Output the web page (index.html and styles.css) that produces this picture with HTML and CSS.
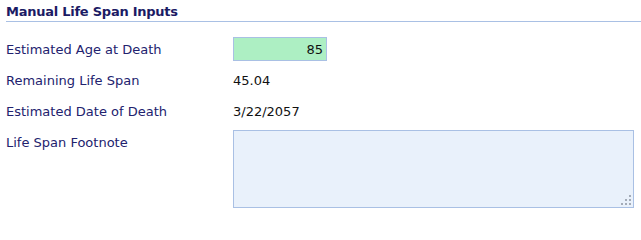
FILE: index.html
```html
<!DOCTYPE html>
<html>
<head>
<meta charset="utf-8">
<link rel="stylesheet" href="styles.css">
</head>
<body>
<div class="panel">
  <h2 class="section-title">Manual Life Span Inputs</h2>
  <div class="form-grid">
    <div class="label">Estimated Age at Death</div>
    <div class="value value-input"><input class="num-input" type="text" value="85"></div>
    <div class="label">Remaining Life Span</div>
    <div class="value">45.04</div>
    <div class="label">Estimated Date of Death</div>
    <div class="value">3/22/2057</div>
    <div class="label label-top">Life Span Footnote</div>
    <div class="value value-top">
      <div class="textarea-wrap">
        <textarea class="note"></textarea>
        <svg class="grip" width="10" height="10" viewBox="0 0 10 10">
          <rect x="8" y="0" width="2" height="2"/>
          <rect x="4" y="4" width="2" height="2"/>
          <rect x="8" y="4" width="2" height="2"/>
          <rect x="0" y="8" width="2" height="2"/>
          <rect x="4" y="8" width="2" height="2"/>
          <rect x="8" y="8" width="2" height="2"/>
        </svg>
      </div>
    </div>
  </div>
</div>
</body>
</html>
```

FILE: styles.css
```css
html, body {
  margin: 0;
  padding: 0;
  background: #ffffff;
}

.panel {
  padding: 0 0 0 6px;
  font-family: "DejaVu Sans", Verdana, sans-serif;
  font-size: 13px;
}

.section-title {
  margin: 0;
  padding: 4px 0 2px 0;
  height: 15px;
  line-height: 15px;
  font-size: 13px;
  font-weight: bold;
  letter-spacing: -0.25px;
  color: #1b1b64;
  border-bottom: 1px solid #a9c0e4;
}

.form-grid {
  display: grid;
  grid-template-columns: 227px 1fr;
  grid-template-rows: 31px 31px 31px auto;
  margin-top: 11px;
}

.label {
  display: flex;
  align-items: center;
  padding-top: 2px;
  color: #22226e;
  line-height: 16px;
}

.value {
  display: flex;
  align-items: center;
  padding-top: 2px;
  color: #111111;
  line-height: 16px;
}

.value-input {
  padding-top: 0;
}

.num-input {
  box-sizing: border-box;
  width: 94px;
  height: 24px;
  margin: 0;
  padding: 1px 3px 0 0;
  border: 1px solid #a9c0e4;
  background: #adefc3;
  text-align: right;
  font-family: inherit;
  font-size: 13px;
  color: #111111;
  outline: none;
}

.label-top {
  align-items: flex-start;
  padding-top: 9px;
}

.value-top {
  align-items: flex-start;
  padding-top: 4px;
}

.textarea-wrap {
  position: relative;
  width: 401px;
  height: 78px;
}

.note {
  box-sizing: border-box;
  display: block;
  width: 401px;
  height: 78px;
  margin: 0;
  border: 1px solid #a9c0e4;
  background: #e9f1fb;
  resize: none;
  outline: none;
}

.grip {
  position: absolute;
  right: 3px;
  bottom: 3px;
  fill: #a3abb7;
}
```
